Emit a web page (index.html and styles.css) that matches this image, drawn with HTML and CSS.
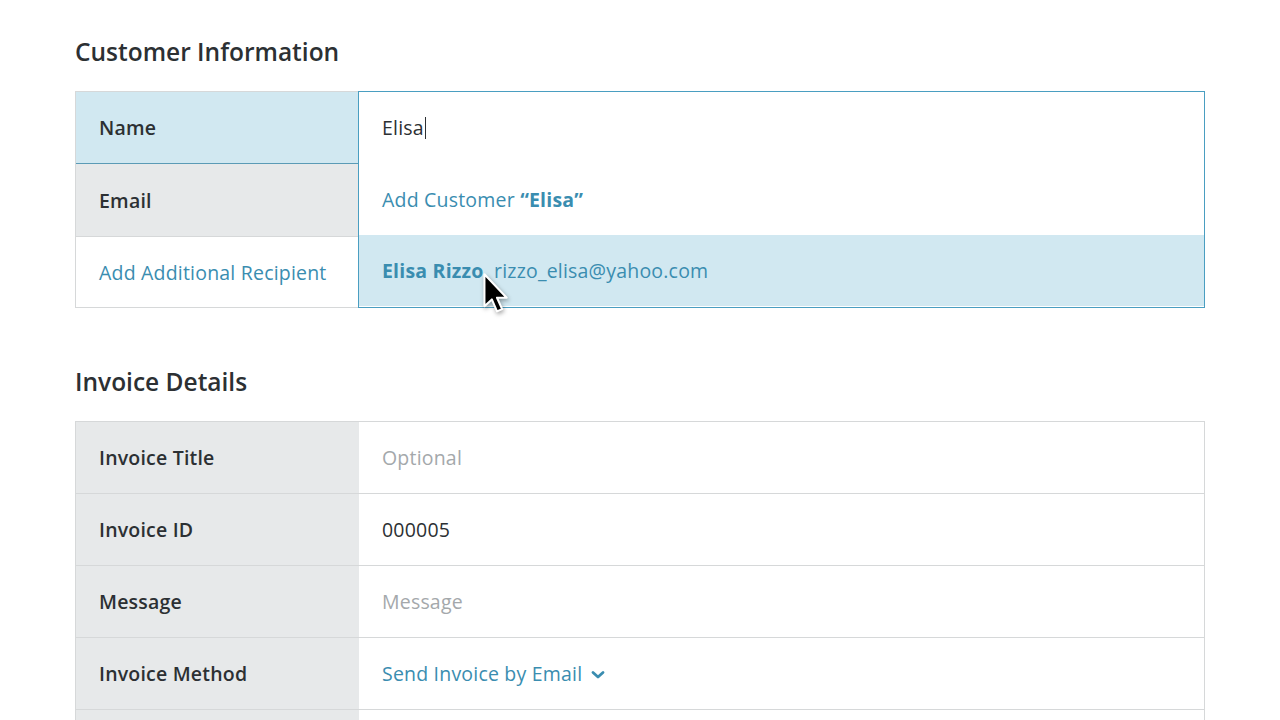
FILE: index.html
```html
<!DOCTYPE html>
<html lang="en">
<head>
    <meta charset="UTF-8">
    <meta name="viewport" content="width=device-width, initial-scale=1.0">
    <title>Create Invoice</title>
    <link rel="stylesheet" href="styles.css">
</head>
<body>
    <div class="page">
        <section class="section">
            <h2>Customer Information</h2>
            <div class="customer-table">
                <div class="label-col">
                    <div class="row label active">Name</div>
                    <div class="row label">Email</div>
                    <div class="row link">Add Additional Recipient</div>
                </div>
                <div class="dropdown">
                    <div class="row value">Elisa<span class="caret"></span></div>
                    <div class="row option">Add Customer&nbsp;<b>&ldquo;Elisa&rdquo;</b></div>
                    <div class="row option selected"><b>Elisa Rizzo</b>&nbsp; rizzo_elisa@yahoo.com
                        <svg class="pointer" width="30" height="48" viewBox="0 0 26 42">
                            <path d="M2 2 L2 30 L8.5 24 L13 34.5 L17.5 32.5 L13 22.5 L21.5 22.5 Z" fill="#000" stroke="#fff" stroke-width="1.8" stroke-linejoin="round"/>
                        </svg>
                    </div>
                </div>
            </div>
        </section>

        <section class="section">
            <h2>Invoice Details</h2>
            <div class="details-table">
                <div class="details-row">
                    <div class="row label">Invoice Title</div>
                    <div class="row value placeholder">Optional</div>
                </div>
                <div class="details-row">
                    <div class="row label">Invoice ID</div>
                    <div class="row value">000005</div>
                </div>
                <div class="details-row">
                    <div class="row label">Message</div>
                    <div class="row value placeholder">Message</div>
                </div>
                <div class="details-row">
                    <div class="row label">Invoice Method</div>
                    <div class="row value method">Send Invoice by Email
                        <svg class="chevron" width="14" height="10" viewBox="0 0 14 10">
                            <path d="M2 2.5 L7 7 L12 2.5" fill="none" stroke="#3a8db0" stroke-width="2.8" stroke-linecap="round" stroke-linejoin="round"/>
                        </svg>
                    </div>
                </div>
                <div class="details-row">
                    <div class="row label"></div>
                    <div class="row value"></div>
                </div>
            </div>
        </section>
    </div>
</body>
</html>
```

FILE: styles.css
```css
body {
    margin: 0;
    background-color: #fff;
    font-family: "Open Sans", sans-serif;
    color: #2c3033;
    overflow: hidden;
}

.page {
    padding: 37px 75px 0 75px;
    width: 1130px;
}

.section {
    margin-bottom: 59px;
}

h2 {
    margin: 0 0 24px 0;
    font-size: 24.5px;
    line-height: 30px;
    font-weight: 600;
    color: #2c3033;
}

.row {
    height: 72px;
    display: flex;
    align-items: center;
    padding-left: 23px;
    font-size: 19.5px;
    letter-spacing: 0.2px;
    box-sizing: border-box;
}

.label {
    font-weight: 600;
    background-color: #e7e9ea;
}

.link {
    color: #3a8db0;
}

/* customer block */
.customer-table {
    display: flex;
}

.label-col {
    width: 282px;
    border: 1px solid #d6d8d9;
    border-right: none;
}

.label-col .row {
    height: 71px;
}

.label-col .row:nth-child(2) {
    height: 72px;
}

.label-col .row:last-child {
    border-top: 1px solid #d6d8d9;
}

.label.active {
    background-color: #d1e8f1;
    border-bottom: 1px solid #5b9bb6;
    height: 72px;
}

.dropdown {
    flex: 1;
    border: 1px solid #4a9ec1;
    position: relative;
}

.dropdown .row:first-child,
.dropdown .row:last-child {
    height: 71px;
}

.value {
    color: #2c3033;
    background-color: #fff;
}

.caret {
    display: inline-block;
    width: 1px;
    height: 22px;
    background-color: #2c3033;
    margin-left: 1px;
}

.option {
    color: #3a8db0;
}

.option b {
    font-weight: 700;
}

.option.selected {
    background-color: #d1e8f1;
    position: relative;
}

.pointer {
    position: absolute;
    left: 123px;
    top: 37px;
    filter: drop-shadow(1px 2px 2px rgba(0, 0, 0, 0.35));
}

/* invoice details */
.details-table {
    border: 1px solid #d6d8d9;
    border-bottom: none;
}

.details-row {
    display: flex;
    border-bottom: 1px solid #d6d8d9;
}

.details-row .row {
    height: 71px;
}

.details-row .label {
    width: 283px;
    flex: none;
}

.details-row .value {
    flex: 1;
}

.placeholder {
    color: #a4a8ab;
}

.value.method {
    color: #3a8db0;
}

.chevron {
    margin-left: 9px;
    margin-top: 2px;
}
```
